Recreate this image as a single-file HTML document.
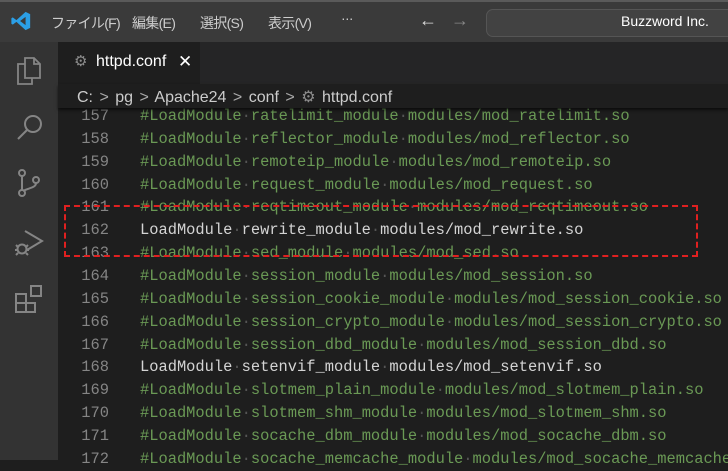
<!DOCTYPE html>
<html><head><meta charset="utf-8"><style>
*{margin:0;padding:0;box-sizing:border-box}
body{width:728px;height:460px;overflow:hidden;background:#1e1e1e;position:relative;font-family:"Liberation Sans","Noto Sans CJK JP",sans-serif}
.title{position:absolute;left:0;top:0;width:728px;height:42px;background:#3a3a3a;border-top:2px solid #5a5a5a}
.menu{position:absolute;top:11px;color:#ccc;font-size:14px;letter-spacing:-0.7px}
.search{position:absolute;left:486px;top:7px;width:250px;height:28px;border:1px solid #555;border-radius:7px;background:#424242}
.act{position:absolute;left:0;top:42px;width:58px;height:418px;background:#333}
.tabs{position:absolute;left:58px;top:42px;width:670px;height:42px;background:#252526}
.tab{position:absolute;left:0;top:0;width:142px;height:42px;background:#1e1e1e;color:#fff;font-size:16px}
.bc{position:absolute;left:58px;top:84px;width:670px;height:24px;background:#1e1e1e;color:#ccc;font-size:16px;z-index:2;box-shadow:0 2px 3px rgba(0,0,0,.6)}
.code{position:absolute;left:58px;top:105px;width:670px;font-family:"Liberation Mono",monospace;font-size:15.4px;z-index:1}
.l{height:22.87px;line-height:22.87px;white-space:pre;position:relative}
.n{position:absolute;left:0;width:51px;text-align:right;color:#858585}
.t{position:absolute;left:82px;color:#6a9955}
.w{color:#d4d4d4}
.d{color:#555}
.box{position:absolute;left:64px;top:205px;width:634px;height:52px;border:2px dashed #e02020;z-index:3}
svg{position:absolute}
</style></head><body>
<div class="title">
<svg style="left:10px;top:8px" width="22" height="22" viewBox="0 0 24 24"><path d="M17 2 L22 4.5 V19.5 L17 22 L7 13 L3 16 L1.5 15 V9 L3 8 L7 11 Z M17 7.5 L11 12 L17 16.5 Z" fill="#2b9fe6"/></svg>
<span class="menu" style="left:51px">ファイル(F)</span>
<span class="menu" style="left:132px">編集(E)</span>
<span class="menu" style="left:200px">選択(S)</span>
<span class="menu" style="left:268px">表示(V)</span>
<span class="menu" style="left:341px;top:8px">···</span>
<span class="menu" style="left:419px;top:8px;font-size:18px;color:#ddd">←</span>
<span class="menu" style="left:451px;top:8px;font-size:18px;color:#888">→</span>
<div class="search"></div>
<span class="menu" style="left:621px;color:#fff;letter-spacing:0">Buzzword Inc.</span>
</div>
<div class="act">
<svg style="left:15px;top:14px" width="28" height="30" viewBox="0 0 28 30" fill="none" stroke="#858585" stroke-width="1.8"><path d="M10 2h9l6 6v14H10z M19 2v6h6 M10 8H3v20h14v-6"/></svg>
<svg style="left:15px;top:70px" width="30" height="30" viewBox="0 0 30 30" fill="none" stroke="#858585" stroke-width="2"><circle cx="18" cy="12" r="8"/><path d="M12 18L3 27"/></svg>
<svg style="left:16px;top:126px" width="26" height="30" viewBox="0 0 26 30" fill="none" stroke="#858585" stroke-width="2"><circle cx="6" cy="5" r="3"/><circle cx="6" cy="25" r="3"/><circle cx="20" cy="12" r="3"/><path d="M6 8v14 M20 15c0 5-8 5-13 8"/></svg>
<svg style="left:13px;top:185px" width="32" height="32" viewBox="0 0 32 32" fill="none" stroke="#858585" stroke-width="2"><path d="M12 4L29 14L14 23"/><circle cx="9" cy="22" r="4.5"/><path d="M3 18l2 2 M15 18l-2 2 M2 23h3 M13 23h3 M3 28l2-2 M15 28l-2-2"/></svg>
<svg style="left:14px;top:242px" width="30" height="30" viewBox="0 0 30 30" fill="none" stroke="#858585" stroke-width="2"><path d="M2 10h10v18H2z M2 19h19v9h-9 M12 10v18"/><rect x="17" y="2" width="10" height="10"/></svg>
</div>
<div class="tabs"><div class="tab">
<span style="position:absolute;left:16px;top:10px;color:#8c8c8c;font-size:15px">⚙</span>
<span style="position:absolute;left:38px;top:11px">httpd.conf</span>
<span style="position:absolute;left:120px;top:10px;font-size:17px">✕</span></div></div>
<div class="bc"><span style="position:absolute;left:19px;top:3px;white-space:pre;word-spacing:2px">C: <span style="color:#aaa">&gt;</span> pg <span style="color:#aaa">&gt;</span> Apache24 <span style="color:#aaa">&gt;</span> conf <span style="color:#aaa">&gt;</span> <span style="color:#8c8c8c">⚙</span> httpd.conf</span></div>
<div class="code">
<div class="l"><span class="n">157</span><span class="t">#LoadModule<span class="d">·</span>ratelimit_module<span class="d">·</span>modules/mod_ratelimit.so</span></div>
<div class="l"><span class="n">158</span><span class="t">#LoadModule<span class="d">·</span>reflector_module<span class="d">·</span>modules/mod_reflector.so</span></div>
<div class="l"><span class="n">159</span><span class="t">#LoadModule<span class="d">·</span>remoteip_module<span class="d">·</span>modules/mod_remoteip.so</span></div>
<div class="l"><span class="n">160</span><span class="t">#LoadModule<span class="d">·</span>request_module<span class="d">·</span>modules/mod_request.so</span></div>
<div class="l"><span class="n">161</span><span class="t">#LoadModule<span class="d">·</span>reqtimeout_module<span class="d">·</span>modules/mod_reqtimeout.so</span></div>
<div class="l"><span class="n">162</span><span class="t w">LoadModule<span class="d">·</span>rewrite_module<span class="d">·</span>modules/mod_rewrite.so</span></div>
<div class="l"><span class="n">163</span><span class="t">#LoadModule<span class="d">·</span>sed_module<span class="d">·</span>modules/mod_sed.so</span></div>
<div class="l"><span class="n">164</span><span class="t">#LoadModule<span class="d">·</span>session_module<span class="d">·</span>modules/mod_session.so</span></div>
<div class="l"><span class="n">165</span><span class="t">#LoadModule<span class="d">·</span>session_cookie_module<span class="d">·</span>modules/mod_session_cookie.so</span></div>
<div class="l"><span class="n">166</span><span class="t">#LoadModule<span class="d">·</span>session_crypto_module<span class="d">·</span>modules/mod_session_crypto.so</span></div>
<div class="l"><span class="n">167</span><span class="t">#LoadModule<span class="d">·</span>session_dbd_module<span class="d">·</span>modules/mod_session_dbd.so</span></div>
<div class="l"><span class="n">168</span><span class="t w">LoadModule<span class="d">·</span>setenvif_module<span class="d">·</span>modules/mod_setenvif.so</span></div>
<div class="l"><span class="n">169</span><span class="t">#LoadModule<span class="d">·</span>slotmem_plain_module<span class="d">·</span>modules/mod_slotmem_plain.so</span></div>
<div class="l"><span class="n">170</span><span class="t">#LoadModule<span class="d">·</span>slotmem_shm_module<span class="d">·</span>modules/mod_slotmem_shm.so</span></div>
<div class="l"><span class="n">171</span><span class="t">#LoadModule<span class="d">·</span>socache_dbm_module<span class="d">·</span>modules/mod_socache_dbm.so</span></div>
<div class="l"><span class="n">172</span><span class="t">#LoadModule<span class="d">·</span>socache_memcache_module<span class="d">·</span>modules/mod_socache_memcache.so</span></div>
</div>
<div class="box"></div>
</body></html>
